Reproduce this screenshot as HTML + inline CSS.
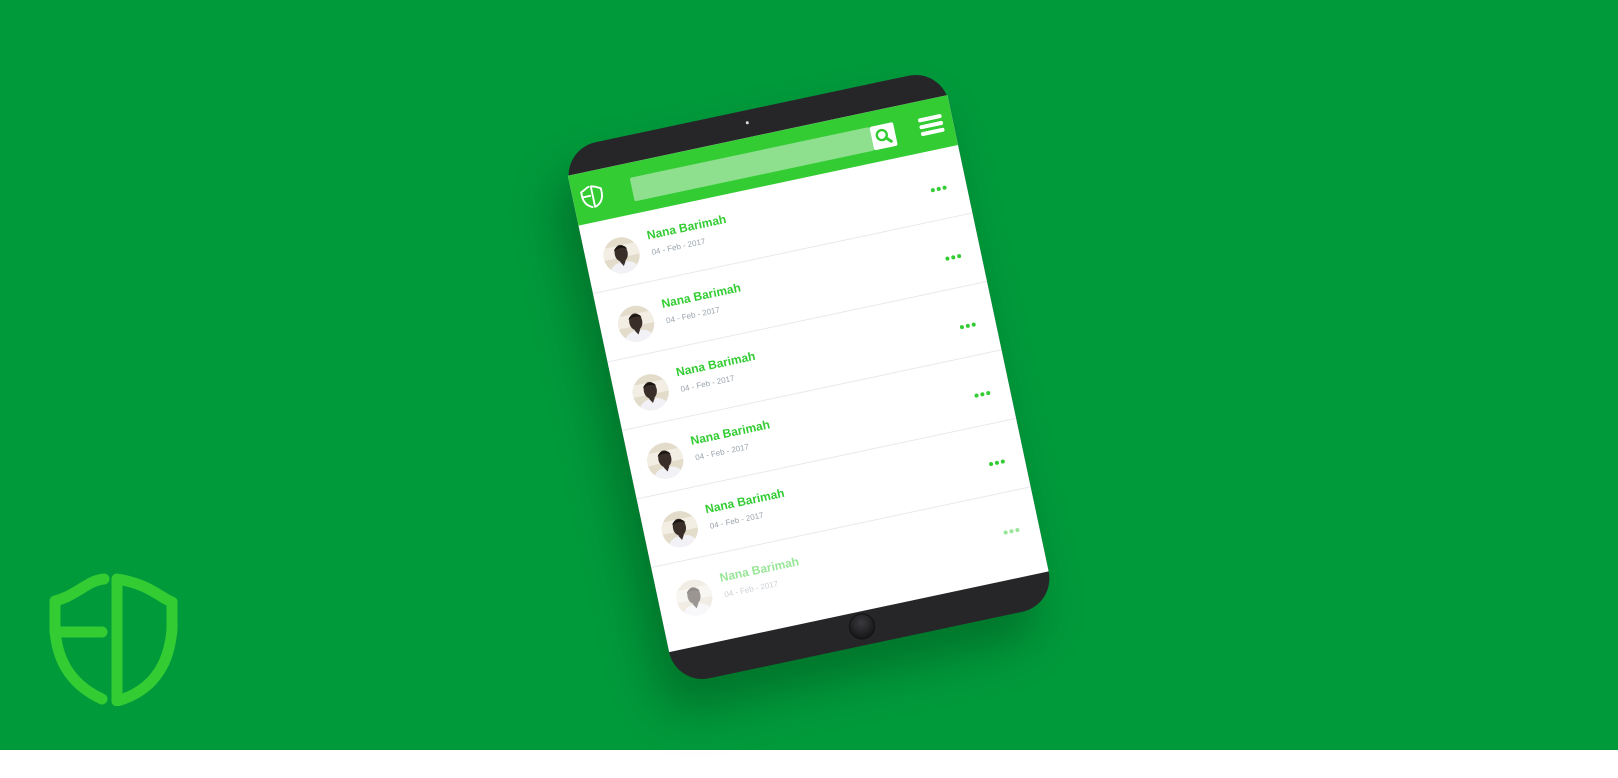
<!DOCTYPE html>
<html><head><meta charset="utf-8"><style>
html,body{margin:0;padding:0}
body{width:1618px;height:778px;background:#fff;position:relative;overflow:hidden;font-family:"Liberation Sans",sans-serif}
.bg{position:absolute;left:0;top:0;width:1618px;height:750px;background:#019a3b}
.tab{position:absolute;left:615px;top:103px;width:388px;height:548px;background:#262629;border-radius:34px;transform:rotate(-12deg);box-shadow:-18px 28px 45px rgba(0,50,15,.35)}
.cam{position:absolute;left:185px;top:11px;width:3px;height:3px;border-radius:50%;background:#ddd}
.home{position:absolute;left:181px;top:516px;width:24px;height:24px;border-radius:50%;background:radial-gradient(circle at 50% 35%,#3a3a3e,#0d0d0f);border:1px solid #111}
.scr{position:absolute;left:0;top:27px;width:388px;height:487px;background:#fff;overflow:hidden}
.hdr{position:absolute;left:0;top:0;width:388px;height:51px;background:#33cc33}
.sb{position:absolute;left:60px;top:15px;width:245px;height:24px;background:#8ee08e;border-radius:2px}
.sbtn{position:absolute;left:305px;top:15px;width:24px;height:24px;background:#fff;border-radius:2px}
.ham{position:absolute;left:354px;top:17px;width:24px}
.ham i{display:block;height:4px;background:#fff;border-radius:2px;margin-bottom:3px}
.row{position:absolute;left:0;width:388px;height:70px;border-bottom:1px solid #e6e9ec;box-sizing:border-box}
.row.last{border-bottom:none}
.av{position:absolute;left:18px;top:20px;width:36px;height:36px;border-radius:50%;overflow:hidden;background:#e4ddcc}
.nm{position:absolute;left:65px;top:17px;font-size:12px;font-weight:bold;color:#33cc33}
.dt{position:absolute;left:66px;top:37px;font-size:8px;color:#9aa3ad}
.dots{position:absolute;left:352px;top:28px}
.dots i{display:inline-block;width:4px;height:4px;border-radius:50%;background:#33cc33;margin-right:2px}
</style></head><body>
<div class="bg"></div>
<svg style="position:absolute;left:47px;top:572px" width="132" height="134" viewBox="-2 -2 132 134" fill="none" stroke="#33cc33" stroke-width="11" stroke-linecap="round" stroke-linejoin="round">
<path d="M55 5 C45 6 38 11 30 16 C20 22 14 25 6 27 L6 55 C8 90 25 112 53 125"/>
<path d="M6 58 L53 58"/>
<path d="M68 5 L68 127 C100 118 120 95 123 55 L123 28 C110 23 100 10 68 5Z"/>
</svg>
<div class="tab">
<div class="cam"></div>
<div class="scr">
<div class="hdr">
<svg style="position:absolute;left:8px;top:14px" width="23" height="23" viewBox="-2 -2 132 134" fill="none" stroke="#fff" stroke-width="11" stroke-linecap="round" stroke-linejoin="round"><path d="M55 5 C45 6 38 11 30 16 C20 22 14 25 6 27 L6 55 C8 90 25 112 53 125"/><path d="M6 58 L53 58"/><path d="M68 5 L68 127 C100 118 120 95 123 55 L123 28 C110 23 100 10 68 5Z"/></svg>
<div class="sb"></div>
<div class="sbtn"><svg width="24" height="24" viewBox="0 0 24 24"><circle cx="10.5" cy="10.5" r="5" fill="none" stroke="#33cc33" stroke-width="2.4"/><path d="M14 14 L18.5 18.5" stroke="#33cc33" stroke-width="3" stroke-linecap="round"/></svg></div>
<div class="ham"><i></i><i></i><i></i></div>
</div>
</div>
<div class="home"></div>
</div>
<script>
var s=document.querySelector('.scr');
for(var i=0;i<6;i++){
var d=document.createElement('div');d.className='row'+(i==5?' last':'');d.style.top=(51+70*i)+'px';
if(i==5)d.style.opacity='.5';
d.innerHTML='<div class="av"><svg width="36" height="36" viewBox="0 0 36 36"><rect width="36" height="36" fill="#e3dccb"/><rect x="0" y="8" width="36" height="12" fill="#f2eee4"/><path d="M3 36 C4 27 11 24.5 18 24.5 C25 24.5 32 27 33 36Z" fill="#f2f2f6"/><path d="M15 24 L18 29 L21 24Z" fill="#3a2e28"/><ellipse cx="18" cy="16" rx="6.5" ry="8.5" fill="#3a2e28"/><path d="M11.5 13 C12 7 24 7 24.5 13 C22 10 14 10 11.5 13Z" fill="#1a1512"/></svg></div><div class="nm">Nana Barimah</div><div class="dt">04 - Feb - 2017</div><div class="dots"><i></i><i></i><i></i></div>';
s.appendChild(d);}
</script>
</body></html>
